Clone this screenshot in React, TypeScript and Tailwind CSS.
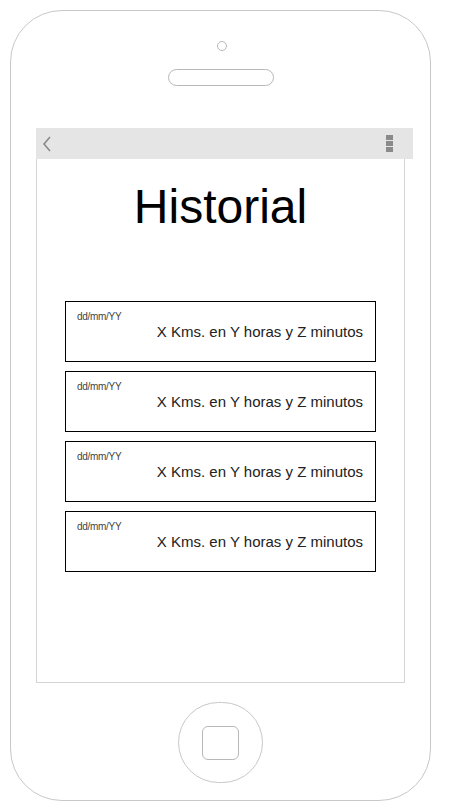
const entries = [
  { date: "dd/mm/YY", text: "X Kms. en Y horas y Z minutos" },
  { date: "dd/mm/YY", text: "X Kms. en Y horas y Z minutos" },
  { date: "dd/mm/YY", text: "X Kms. en Y horas y Z minutos" },
  { date: "dd/mm/YY", text: "X Kms. en Y horas y Z minutos" },
];

function HistoryCard({ date, text }: { date: string; text: string }) {
  return (
    <div className="w-[311px] h-[61px] border border-black flex flex-col pt-[9px] pl-[11px] pr-[12px]">
      <span className="text-[10px] leading-[12px] text-[#444] tracking-[-0.3px]">{date}</span>
      <span className="text-[15px] leading-[18px] text-[#222] text-right">{text}</span>
    </div>
  );
}

export default function App() {
  return (
    <div
      className="w-[451px] h-[811px] bg-white pt-[10px] pl-[10px]"
      style={{ fontFamily: '"Liberation Sans", Arial, sans-serif' }}
    >
      <div className="w-[421px] h-[791px] border border-[#c8c8c8] rounded-[52px] flex flex-col items-center">
        {/* camera + speaker */}
        <div className="mt-[30px] ml-[3px] w-[10px] h-[10px] rounded-full border border-[#b8b8b8]" />
        <div className="mt-[18px] w-[106px] h-[17px] rounded-full border border-[#b8b8b8]" />

        {/* screen */}
        <div className="mt-[42px] self-start ml-[25px] w-[369px] h-[555px] border border-[#d4d4d4] flex flex-col items-center">
          <div className="-mt-px -ml-px self-start w-[377px] h-[31px] bg-[#e5e5e5] flex items-center justify-between pl-[6px] pr-[20px]">
            <svg width="10" height="16" viewBox="0 0 10 16" fill="none">
              <path d="M8 1 L2 8 L8 15" stroke="#8a8a8a" strokeWidth="1.6" />
            </svg>
            <div className="flex flex-col gap-[1px]">
              <div className="w-[7px] h-[5px] bg-[#8a8a8a]" />
              <div className="w-[7px] h-[5px] bg-[#8a8a8a]" />
              <div className="w-[7px] h-[5px] bg-[#8a8a8a]" />
            </div>
          </div>

          <h1 className="mt-[24px] text-[48px] leading-[48px] text-black">Historial</h1>

          <div className="mt-[70px] flex flex-col gap-[9px]">
            {entries.map((e, i) => (
              <HistoryCard key={i} date={e.date} text={e.text} />
            ))}
          </div>
        </div>

        {/* home button */}
        <div className="mt-[19px] w-[85px] h-[81px] rounded-full border border-[#c8c8c8] flex items-center justify-center">
          <div className="w-[37px] h-[34px] rounded-[6px] border border-[#b8b8b8]" />
        </div>
      </div>
    </div>
  );
}
